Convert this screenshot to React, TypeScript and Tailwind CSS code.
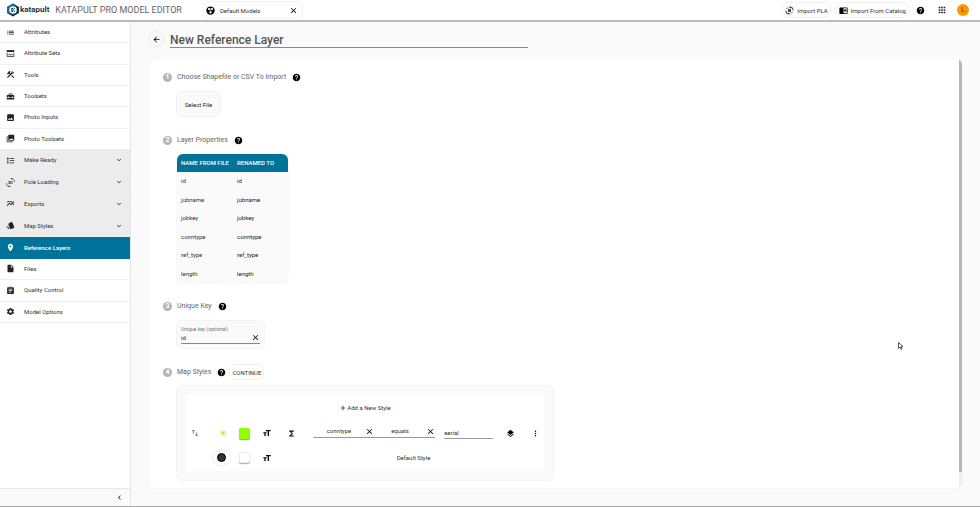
import React from "react";
import type { IconType } from "react-icons";
import {
  Md3dRotation,
  MdAdd,
  MdApps,
  MdArrowBack,
  MdAssignment,
  MdChevronLeft,
  MdChromeReaderMode,
  MdClose,
  MdConstruction,
  MdExpandMore,
  MdFormatLineSpacing,
  MdFunctions,
  MdHelp,
  MdHomeRepairService,
  MdInsertDriveFile,
  MdLayers,
  MdList,
  MdMoreVert,
  MdMultilineChart,
  MdPhoto,
  MdPhotoLibrary,
  MdPlace,
  MdSettings,
  MdStyle,
} from "react-icons/md";

interface IconProps {
  className?: string;
}

interface NavItem {
  label: string;
  icon: IconType | React.FC<IconProps>;
}

const AttributeSetsIcon: React.FC<IconProps> = ({ className }) => (
  <svg viewBox="0 0 24 24" className={className} fill="none" stroke="currentColor">
    <path d="M2 3h20v5H2z" fill="currentColor" stroke="none" />
    <path d="M3 10v10h18V10" strokeWidth="2" />
    <path d="M6 17l3-4 3 4 3-4 3 4" strokeWidth="2" />
  </svg>
);

const RotateIcon: React.FC<IconProps> = ({ className }) => (
  <svg viewBox="0 0 24 24" className={className} fill="none" stroke="currentColor" strokeWidth="2">
    <path d="M2 12a10 10 0 0 0 10 10l-4-4M22 12A10 10 0 0 0 12 2l4 4" />
    <path d="M8 9h8M8 12h8M8 15h8" />
    <path d="M4 8l4-4M20 16l-4 4" />
  </svg>
);

const ModelsIcon: React.FC<IconProps> = ({ className }) => (
  <svg viewBox="0 0 24 24" className={className}>
    <circle cx="12" cy="12" r="11" fill="currentColor" />
    <path d="M12 11V5M12 12l-5 4M12 12l5 4" stroke="#fff" strokeWidth="1" />
    <circle cx="8" cy="8" r="3" fill="#fff" />
    <circle cx="16" cy="8" r="3" fill="#fff" />
    <circle cx="12" cy="17" r="3" fill="#fff" />
  </svg>
);

const TextSizeIcon: React.FC<IconProps> = ({ className }) => (
  <svg viewBox="0 0 24 24" className={className} fill="currentColor">
    <path d="M9 3h14v4h-5v14h-4V7H9z" />
    <path d="M1 10h10v3H8v8H4v-8H1z" />
  </svg>
);

const topItems: NavItem[] = [
  { label: "Attributes", icon: MdList },
  { label: "Attribute Sets", icon: AttributeSetsIcon },
  { label: "Tools", icon: MdConstruction },
  { label: "Toolsets", icon: MdHomeRepairService },
  { label: "Photo Inputs", icon: MdPhoto },
  { label: "Photo Toolsets", icon: MdPhotoLibrary },
];

const groupItems: NavItem[] = [
  { label: "Make Ready", icon: MdFormatLineSpacing },
  { label: "Pole Loading", icon: Md3dRotation },
  { label: "Exports", icon: MdMultilineChart },
  { label: "Map Styles", icon: MdStyle },
];

const bottomItems: NavItem[] = [
  { label: "Reference Layers", icon: MdPlace },
  { label: "Files", icon: MdInsertDriveFile },
  { label: "Quality Control", icon: MdAssignment },
  { label: "Model Options", icon: MdSettings },
];

const fields = ["id", "jobname", "jobkey", "conntype", "ref_type", "length"];

const Logo: React.FC = () => (
  <a href="#" aria-label="katapult" className="flex items-center">
    <svg viewBox="0 0 28 28" className="size-[14px]">
      <path d="M14 1l12 7v12l-12 7-12-7V8z" fill="#0b3a55" />
      <path d="M2 8l12-7 5 3-12 8v11l-5-3z" fill="#0d7299" />
      <circle cx="14" cy="14" r="6" fill="none" stroke="#fff" strokeWidth="3" />
      <path d="M10 14h8M14 10l4 4-4 4" stroke="#cfe6ee" strokeWidth="2" fill="none" />
    </svg>
    <span className="text-[8px] font-bold leading-[10px] text-[#12384f]">
      katapult
    </span>
  </a>
);

const Header: React.FC = () => (
  <header className="z-10 flex h-[22px] shrink-0 items-center border-b-2 border-[#b9bcbc] bg-white pl-[6px] pr-[11px]">
    <Logo />
    <h1 className="ml-[6px] text-[9px] leading-3 text-[#666]">
      KATAPULT PRO MODEL EDITOR
    </h1>
    <div className="ml-5 flex h-[18px] w-[101px] items-center rounded-md border border-[#f3f3f3] pl-[3px] pr-1">
      <ModelsIcon className="size-[9px] text-black" />
      <span className="ml-[5px] text-[6px] text-[#333]">Default Models</span>
      <button aria-label="Close tab" className="ml-auto">
        <MdClose className="size-[9px] text-black" />
      </button>
    </div>
    <div className="ml-auto flex items-center text-[6px] text-[#333]">
      <button className="flex h-4 items-center gap-[3px] rounded-lg border border-[#f0f0f0] px-[3px]">
        <RotateIcon className="size-[9px] text-black" />
        Import PLA
      </button>
      <button className="ml-[3px] flex h-4 items-center gap-[3px] rounded-lg border border-[#f0f0f0] px-[3px]">
        <MdChromeReaderMode className="size-[9px] text-black" />
        Import From Catalog
      </button>
      <button aria-label="Help" className="ml-[6px]">
        <MdHelp className="size-[9px] text-black" />
      </button>
      <button aria-label="Apps" className="ml-3">
        <MdApps className="size-[10px] text-[#222]" />
      </button>
      <button className="ml-[10px] size-3 rounded-full bg-[#ff9800] text-[7px] leading-3 text-[#333]">
        L
      </button>
    </div>
  </header>
);

interface NavGroupProps {
  items: NavItem[];
  active?: string;
  expandable?: boolean;
  className: string;
}

const NavGroup: React.FC<NavGroupProps> = ({ items, active, expandable, className }) => (
  <ul className={`grid auto-rows-fr ${className}`}>
    {items.map(({ label, icon: Icon }) => (
      <li
        key={label}
        className={
          label === active
            ? "bg-[#00739b] font-medium text-white"
            : "border-b border-[#efefef] text-[#333]"
        }
      >
        <a href="#" className="flex h-full items-center pl-[6px] pr-[7px]">
          <Icon className={label === active ? "size-[9px] text-white" : "size-[9px] text-[#222]"} />
          <span className="ml-[9px]">{label}</span>
          {expandable && <MdExpandMore className="ml-auto size-2 text-[#222]" />}
        </a>
      </li>
    ))}
  </ul>
);

const Sidebar: React.FC = () => (
  <aside className="flex w-[131px] shrink-0 flex-col border-r border-[#e4e4e4] bg-white text-[6px] leading-2">
    <nav>
      <NavGroup items={topItems} className="h-[128px]" />
      <NavGroup items={groupItems} expandable className="h-[87px] bg-[#ececec]" />
      <NavGroup items={bottomItems} active="Reference Layers" className="h-[86px]" />
    </nav>
    <div className="mt-auto flex h-[18px] items-center justify-end border-t border-[#e9e9e9] bg-[#fafafa] pr-[6px]">
      <button aria-label="Collapse sidebar">
        <MdChevronLeft className="size-[9px] text-[#222]" />
      </button>
    </div>
  </aside>
);

interface StepProps {
  number: number;
  title: string;
  children?: React.ReactNode;
}

const StepTitle: React.FC<StepProps> = ({ number, title, children }) => (
  <div className="flex h-4 items-center">
    <span className="size-[9px] rounded-full bg-[#b5b5b5] text-center text-[7px] font-bold leading-[9px] text-white">
      {number}
    </span>
    <h2 className="ml-[5px] text-[7px] text-[#666]">{title}</h2>
    <button aria-label={`Help: ${title}`} className="ml-[6px]">
      <MdHelp className="size-[9px] text-black" />
    </button>
    {children}
  </div>
);

const PropertiesTable: React.FC = () => (
  <div className="ml-[14px] w-[111px] overflow-hidden rounded-md bg-[#fafafa] shadow-[0_0_1px_#ccc]">
    <table className="h-[129px] w-full text-left text-[6px] leading-2 text-[#333]">
      <thead className="bg-[#00739b] text-white">
        <tr className="h-[18px]">
          <th className="w-[56px] pl-1 font-medium">NAME FROM FILE</th>
          <th className="pl-1 font-medium">RENAMED TO</th>
        </tr>
      </thead>
      <tbody>
        {fields.map((field) => (
          <tr key={field}>
            <td className="pl-1">{field}</td>
            <td className="pl-1">
              <input
                aria-label={`Rename ${field}`}
                defaultValue={field}
                className="block w-11 text-[6px] leading-2 text-[#222]"
              />
            </td>
          </tr>
        ))}
      </tbody>
    </table>
  </div>
);

const StyleSelect: React.FC<{ label: string; value: string }> = ({ label, value }) => (
  <div className="flex h-3 w-[61px] items-center border-b border-[#999]">
    <input
      aria-label={label}
      defaultValue={value}
      className="w-[52px] text-center text-[6px] leading-2"
    />
    <button aria-label={`Clear ${label}`}>
      <MdClose className="size-[9px] text-black" />
    </button>
  </div>
);

const MapStyles: React.FC = () => (
  <div className="ml-[13px] w-[378px] rounded-md border border-[#f3f3f3] bg-[#fafafa] p-[9px] text-[6px] leading-2 text-[#333]">
    <div className="bg-white pb-[3px] pt-2">
      <button className="mx-auto flex h-[9px] items-center">
        <MdAdd className="size-2 text-black" />
        Add a New Style
      </button>
      <div className="mt-2 flex h-[26px] items-center">
        <button aria-label="Reorder" className="ml-[5px]">
          <svg viewBox="0 0 24 24" className="size-2" fill="none" stroke="#444" strokeWidth="2">
            <path d="M7 14V3M3 7l4-4 4 4M17 10v11M13 17l4 4 4-4" />
          </svg>
        </button>
        <button aria-label="Marker" className="ml-5">
          <svg viewBox="0 0 24 24" className="size-2" stroke="#8f0" strokeWidth="2">
            <path d="M12 3v18M3 12h18M5 5l14 14M19 5L5 19" />
          </svg>
        </button>
        <button aria-label="Fill color" className="ml-3 size-[11px] rounded-xs bg-[#90ff00] shadow-[0_1px_1px_#999]" />
        <button aria-label="Label" className="ml-[13px]">
          <TextSizeIcon className="size-2 text-black" />
        </button>
        <button aria-label="Formula" className="ml-4">
          <MdFunctions className="size-[9px] text-black" />
        </button>
        <div className="mb-[3px] ml-[17px] flex">
          <StyleSelect label="Attribute" value="conntype" />
          <StyleSelect label="Operator" value="equals" />
        </div>
        <input
          aria-label="Value"
          defaultValue="aerial"
          className="ml-[9px] h-3 w-[49px] border-b border-[#999] text-[6px] leading-2"
        />
        <button aria-label="Layer order" className="ml-[13px]">
          <MdLayers className="size-[9px] text-black" />
        </button>
        <button aria-label="More options" className="ml-4">
          <MdMoreVert className="size-[9px] text-black" />
        </button>
      </div>
      <div className="mt-px flex h-[21px] items-center">
        <button aria-label="Default marker" className="ml-[26px] flex h-4 w-[19px] items-center justify-start rounded-lg border border-[#f0f0f0] pl-1">
          <span className="size-[9px] rounded-full border border-black bg-[#333]" />
        </button>
        <button aria-label="Default fill color" className="ml-2 size-[11px] rounded-xs border border-[#f0f0f0] bg-white shadow-[0_1px_1px_#aaa]" />
        <button aria-label="Default label" className="ml-[13px]">
          <TextSizeIcon className="size-2 text-black" />
        </button>
        <span className="ml-10 flex-1 pr-7 text-center">Default Style</span>
      </div>
    </div>
  </div>
);

const App: React.FC = () => {
  return (
    <div className="flex h-screen flex-col overflow-hidden border-b border-[#aaa] bg-[#fafafa] font-['Roboto',sans-serif]">
      <Header />
      <div className="flex min-h-0 flex-1">
        <Sidebar />
        <main className="flex min-w-0 flex-1 flex-col pb-[18px] pl-[17px] pr-[18px] pt-[9px]">
          <div className="flex h-4 items-start">
            <button aria-label="Back" className="flex size-4 shrink-0 items-center justify-center rounded-full border border-[#eee]">
              <MdArrowBack className="size-[9px] text-black" />
            </button>
            <input
              aria-label="Layer name"
              defaultValue="New Reference Layer"
              className="ml-[6px] h-[17px] w-[358px] border-b border-[#888] pt-px text-[12px] font-medium leading-4 text-[#555]"
            />
          </div>
          <div className="ml-px mt-3 flex min-h-0 flex-1 overflow-hidden rounded-md bg-white shadow-[0_0_1px_#ddd]">
            <div className="flex-1 overflow-hidden pl-[14px] pt-[10px]">
              <section>
                <StepTitle number={1} title="Choose Shapefile or CSV To Import" />
                <button className="ml-[13px] mt-[6px] h-[26px] w-[45px] rounded-md border border-[#f0f0f0] bg-[#fafafa] text-[6px] text-[#222]">
                  Select File
                </button>
              </section>
              <section className="mt-[15px]">
                <StepTitle number={2} title="Layer Properties" />
                <div className="mt-[6px]">
                  <PropertiesTable />
                </div>
              </section>
              <section className="mt-[15px]">
                <StepTitle number={3} title="Unique Key" />
                <div className="ml-[13px] mt-[6px] h-[29px] w-[89px] rounded-md border border-[#f3f3f3] bg-[#fafafa] px-1 pt-[5px]">
                  <label htmlFor="unique-key" className="block text-[5px] leading-[6px] text-[#777]">
                    Unique key (optional)
                  </label>
                  <div className="flex h-3 items-center border-b border-[#888]">
                    <input
                      id="unique-key"
                      defaultValue="id"
                      className="min-w-0 flex-1 text-[6px] leading-2 text-[#222]"
                    />
                    <button aria-label="Clear unique key">
                      <MdClose className="size-[9px] text-black" />
                    </button>
                  </div>
                </div>
              </section>
              <section className="mt-[15px]">
                <StepTitle number={4} title="Map Styles">
                  <button className="ml-[3px] h-4 rounded-md border border-[#f0f0f0] px-[2px] text-[6px] text-[#333]">
                    CONTINUE
                  </button>
                </StepTitle>
                <div className="mt-[5px]">
                  <MapStyles />
                </div>
              </section>
            </div>
            <div className="flex w-[3px] flex-col bg-[#f0f0f0] pb-4">
              <div className="flex-1 bg-[#b5b5b5]" />
            </div>
          </div>
        </main>
      </div>
      <svg viewBox="0 0 12 16" className="absolute left-[898px] top-[342px] h-2 w-[6px]" fill="#fff" stroke="#555" strokeWidth="2">
        <path d="M1 1v12l3-3 2 5 2-1-2-5h4z" />
      </svg>
    </div>
  );
};

export default App;
